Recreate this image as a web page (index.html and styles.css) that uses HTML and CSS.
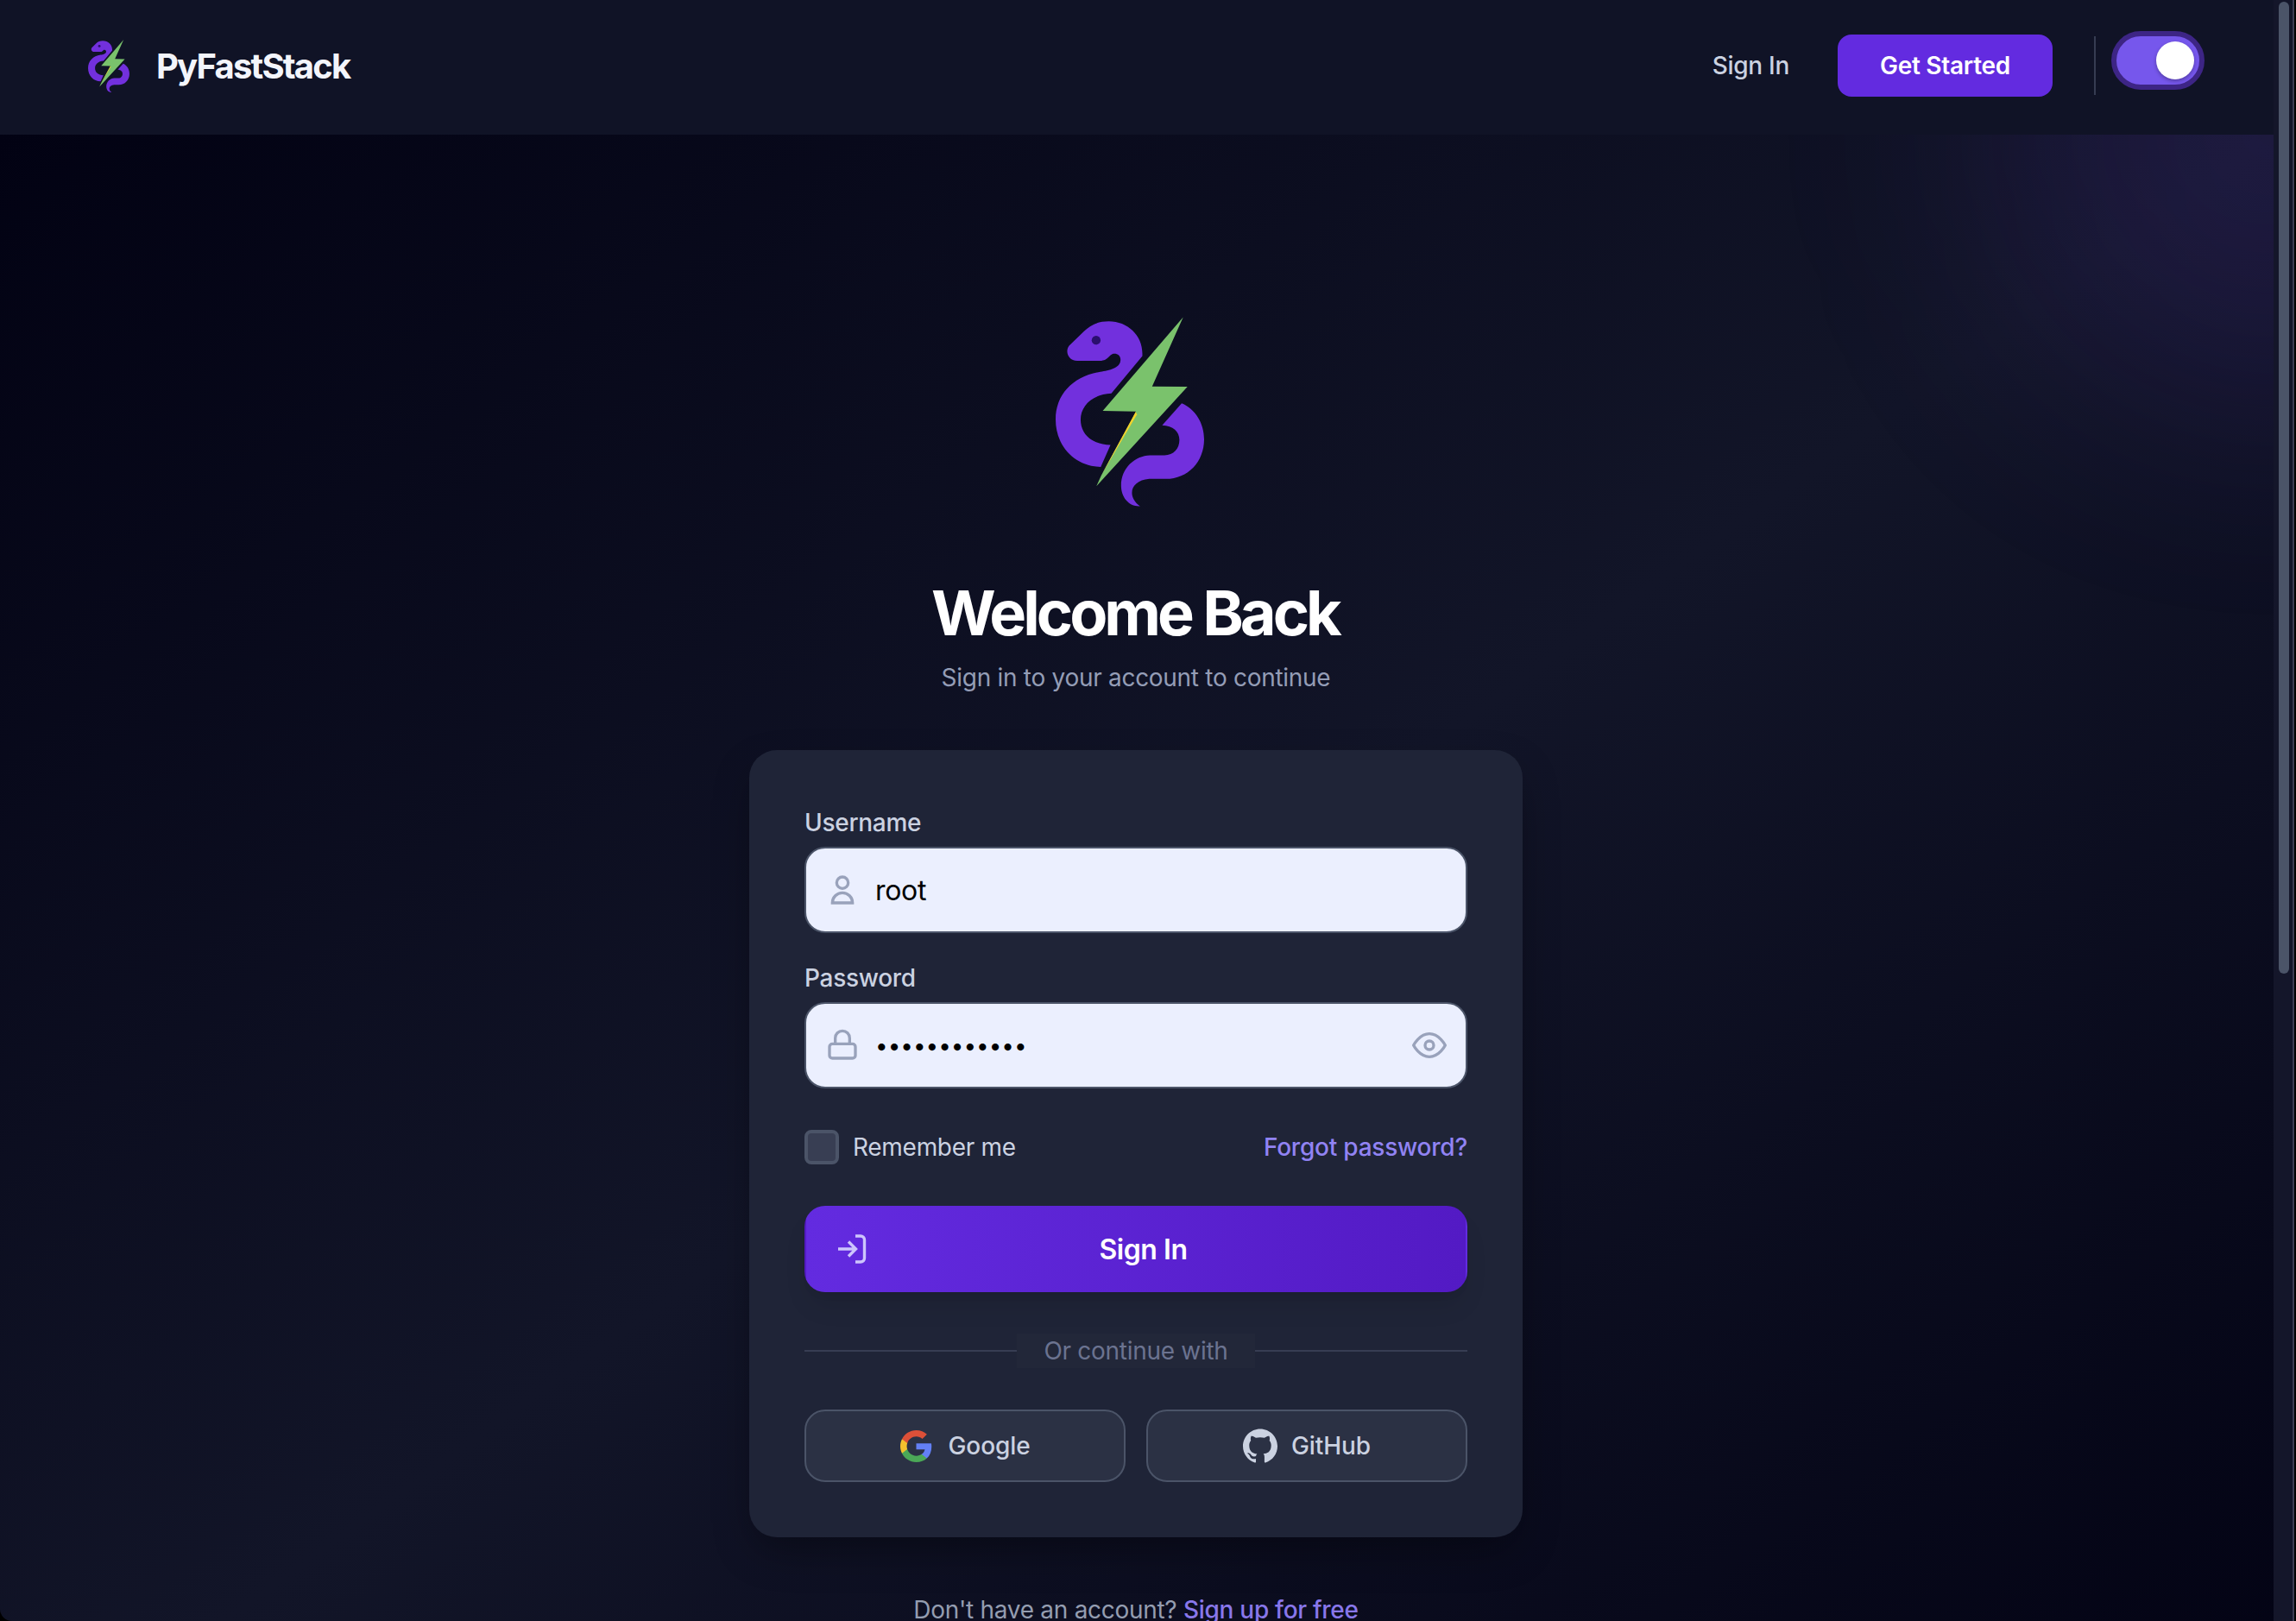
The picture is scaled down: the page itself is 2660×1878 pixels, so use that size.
FILE: index.html
```html
<!DOCTYPE html>
<html lang="en">
<head>
<meta charset="utf-8">
<title>Sign In - PyFastStack</title>
<link rel="stylesheet" href="styles.css">
</head>
<body>
<svg width="0" height="0" class="sprite" aria-hidden="true">
  <symbol id="logo" viewBox="129 82 517 658">
    <path fill="#7230dd" d="M176 181 L228 131 C250 108 278 96 314 96 C380 96 431 145 431 208 L431 217 L323 347 C255 350 216 392 216 438 C216 490 256 525 320 527 L286 603 C195 602 129 530 129 438 C129 350 190 287 285 272 C315 267 355 260 355 230 C355 217 345 209 334 209 C315 209 315 233 283 234 L204 234 C172 232 161 200 176 181 Z"/>
    <circle cx="270" cy="162" r="15.500" fill="#2b0f6e"/>
    <path fill="#7230dd" d="M568 382 C616 402 646 452 646 507 C646 585 590 645 513 645 L455 645 C390 650 375 705 423 740 C385 742 357 710 357 668 C357 608 405 564 458 563 L508 563 C540 563 560 540 560 509 C560 480 538 459 500 458 Z"/>
    <path fill="#7ac26c" d="M573 82 L465 323 L588 324 L271 670 L288 633 L409 410 L293 408 Z"/>
    <path fill="#f3d22b" d="M408 411 L412 421 L292 625 Z"/>
  </symbol>
</svg>
<div class="window">
  <div class="page">
    <header class="nav">
      <a class="brand"><svg class="brand-logo"><use href="#logo"/></svg><span>PyFastStack</span></a>
      <nav class="nav-actions">
        <a class="nav-link">Sign In</a>
        <a class="nav-cta">Get Started</a>
        <span class="nav-rule"></span>
        <span class="toggle"><span class="knob"></span></span>
      </nav>
    </header>
    <main class="main">
      <div class="glow"></div>
      <div class="content">
        <svg class="hero-logo"><use href="#logo"/></svg>
        <h1>Welcome Back</h1>
        <p class="lead">Sign in to your account to continue</p>
        <form class="card">
          <label class="label" for="user">Username</label>
          <div class="field">
            <svg class="icon" viewBox="0 0 24 24"><path d="M16 7a4 4 0 11-8 0 4 4 0 018 0zM12 14a7 7 0 00-7 7h14a7 7 0 00-7-7z"/></svg>
            <input id="user" type="text" value="root">
          </div>
          <label class="label" for="pass">Password</label>
          <div class="field">
            <svg class="icon" viewBox="0 0 24 24"><rect x="3" y="11" width="18" height="10" rx="2"/><path d="M7 11V7a5 5 0 0 1 10 0v4"/></svg>
            <span class="dots">••••••••••••</span>
            <svg class="icon eye" viewBox="0 0 24 24"><path d="M1 12s4-8 11-8 11 8 11 8-4 8-11 8-11-8-11-8z"/><circle cx="12" cy="12" r="3"/></svg>
          </div>
          <div class="options">
            <label class="remember"><span class="box"></span>Remember me</label>
            <a class="forgot">Forgot password?</a>
          </div>
          <button class="submit" type="button">
            <svg class="login-icon" viewBox="0 0 34 34"><path d="M20 2h6a4.500 4.500 0 0 1 4.500 4.500v21a4.500 4.500 0 0 1-4.500 4.500h-6M0 17h21M12 8.500l8.500 8.500-8.500 8.500"/></svg>
            <span>Sign In</span>
          </button>
          <div class="divider"><span>Or continue with</span></div>
          <div class="social">
            <button type="button" class="provider">
              <svg class="google" viewBox="1 1 22 22"><path fill="#6380f5" d="M22.560 12.250c0-.78-.07-1.530-.2-2.250H12v4.260h5.920c-.26 1.370-1.040 2.530-2.210 3.310v2.770h3.570c2.080-1.920 3.280-4.740 3.280-8.090z"/><path fill="#4ba857" d="M12 23c2.970 0 5.460-.98 7.280-2.660l-3.570-2.770c-.98.66-2.230 1.060-3.710 1.060-2.860 0-5.290-1.930-6.160-4.530H2.180v2.840C3.990 20.530 7.700 23 12 23z"/><path fill="#f3c12d" d="M5.840 14.090c-.22-.66-.35-1.360-.35-2.090s.13-1.430.35-2.090V7.070H2.180C1.430 8.550 1 10.220 1 12s.43 3.450 1.180 4.930l2.850-2.220.81-.62z"/><path fill="#dc5038" d="M12 5.380c1.620 0 3.060.56 4.210 1.640l3.150-3.150C17.450 2.090 14.970 1 12 1 7.700 1 3.990 3.470 2.180 7.070l3.660 2.840c.87-2.600 3.300-4.530 6.160-4.530z"/></svg>
              <span>Google</span>
            </button>
            <button type="button" class="provider">
              <svg class="github" viewBox="0 0 24 24"><path fill="currentColor" d="M12 .297c-6.630 0-12 5.373-12 12 0 5.303 3.438 9.800 8.205 11.385.6.113.82-.258.82-.577 0-.285-.01-1.040-.015-2.040-3.338.724-4.042-1.610-4.042-1.610C4.422 18.070 3.633 17.700 3.633 17.700c-1.087-.744.084-.729.084-.729 1.205.084 1.838 1.236 1.838 1.236 1.070 1.835 2.809 1.305 3.495.998.108-.776.417-1.305.760-1.605-2.665-.3-5.466-1.332-5.466-5.930 0-1.310.465-2.380 1.235-3.220-.135-.303-.54-1.523.105-3.176 0 0 1.005-.322 3.300 1.230.96-.267 1.980-.399 3-.405 1.020.006 2.040.138 3 .405 2.280-1.552 3.285-1.230 3.285-1.230.645 1.653.24 2.873.12 3.176.765.840 1.230 1.910 1.230 3.220 0 4.610-2.805 5.625-5.475 5.920.42.36.81 1.096.81 2.220 0 1.606-.015 2.896-.015 3.286 0 .315.210.690.825.570C20.565 22.092 24 17.592 24 12.297c0-6.627-5.373-12-12-12"/></svg>
              <span>GitHub</span>
            </button>
          </div>
        </form>
        <p class="signup">Don't have an account? <a>Sign up for free</a></p>
      </div>
    </main>
  </div>
  <div class="scrollbar"><span class="thumb"></span></div>
</div>
</body>
</html>
```
FILE: styles.css
```css
* { box-sizing: border-box; }

body {
  margin: 0;
  height: 1878px;
  overflow: hidden;
  background: #000;
  font-family: Inter, "Liberation Sans", sans-serif;
  font-size: 28px;
  line-height: 40px;
  letter-spacing: -.29px;
  color: #cbd2e1;
}

button, input { font: inherit; color: inherit; letter-spacing: inherit; }
h1, p { margin: 0; }
.sprite { position: absolute; }

.window { display: flex; width: 2658px; height: 1878px; overflow: hidden; border-bottom-left-radius: 14px; }
.page { width: 2634px; flex: none; height: 1878px; overflow: hidden; }

.nav {
  height: 156px;
  padding: 0 80px 0 102px;
  display: flex;
  align-items: flex-start;
  justify-content: space-between;
  background: #101326;
}
.brand { display: flex; align-items: center; gap: 31px; margin-top: 46px; }
.brand-logo { width: 48px; height: 61px; }
.brand span {
  font-size: 40px;
  font-weight: 700;
  letter-spacing: -1.800px;
  color: #f3f5fb;
}
.nav-actions { display: flex; align-items: flex-start; padding-top: 36px; }
.nav-link { font-weight: 500; padding-top: 20px; margin-right: 56px; }
.nav-cta {
  width: 249px;
  height: 72px;
  margin-top: 4px;
  display: flex;
  align-items: center;
  justify-content: center;
  border-radius: 16px;
  background: #632be0;
  color: #fff;
  font-weight: 600;
}
.nav-rule { width: 2px; height: 68px; margin: 6px 18px 0 48px; background: #363c52; }
.toggle {
  width: 108px;
  height: 68px;
  padding: 6px;
  display: flex;
  justify-content: flex-end;
  border: 6px solid #3d2585;
  border-radius: 34px;
  background: #7657ec;
}
.knob { width: 44px; height: 44px; border-radius: 50%; background: #fff; box-shadow: 0 2px 4px rgba(0, 0, 0, .3); }

.main {
  position: relative;
  height: 1910px;
  overflow: hidden;
  padding-right: 2px;
  background: linear-gradient(to bottom right, #020213, #121528 50%, #020213);
}
.glow {
  position: absolute;
  top: -320px;
  right: -320px;
  width: 640px;
  height: 640px;
  border-radius: 50%;
  background: rgba(109, 60, 220, .13);
  filter: blur(128px);
}
.content {
  position: relative;
  width: 896px;
  margin: 0 auto;
  padding-top: 211px;
  display: flex;
  flex-direction: column;
  align-items: center;
}
.hero-logo { width: 172px; height: 220px; margin-left: -14px; }
h1 {
  margin-top: 83px;
  font-size: 72px;
  line-height: 80px;
  font-weight: 700;
  letter-spacing: -3.950px;
  text-indent: -2px;
  color: #fff;
}
.lead { margin-top: 15px; color: #949db6; }

.card {
  width: 896px;
  height: 912px;
  margin-top: 64px;
  padding: 64px;
  border-radius: 32px;
  background: #1f2437;
  box-shadow: 0 20px 50px -10px rgba(0, 0, 0, .4);
}
.label { display: block; margin-bottom: 8px; font-weight: 500; }
.field {
  height: 100px;
  margin-bottom: 32px;
  padding: 0 22px;
  display: flex;
  align-items: center;
  border: 2px solid #4b5468;
  border-radius: 24px;
  background: #ebeffe;
  color: #000;
  font-size: 32px;
}
.field input {
  flex: 1;
  padding: 2px 0 0;
  margin-left: 18px;
  border: 0;
  outline: 0;
  background: none;
}
.dots { flex: 1; margin-left: 18px; padding-top: 2px; font-size: 26px; letter-spacing: 0; }
.icon { width: 40px; height: 40px; fill: none; stroke: #99a2bb; stroke-width: 2; }
.eye { stroke-linejoin: round; }

.options { display: flex; align-items: center; justify-content: space-between; height: 40px; margin-top: 48px; }
.remember { display: flex; align-items: center; gap: 16px; }
.box { width: 40px; height: 40px; border: 4px solid #4b5468; border-radius: 8px; background: #383e53; }
.forgot { color: #9183f3; font-weight: 500; letter-spacing: -.22px; }

.submit {
  position: relative;
  display: flex;
  align-items: center;
  justify-content: center;
  width: 100%;
  height: 100px;
  margin: 48px 0;
  padding: 2px 0 0 17px;
  border: 2px solid transparent;
  border-radius: 24px;
  background: linear-gradient(to right, #632be0, #531ac4);
  box-shadow: 0 20px 30px -6px rgba(0, 0, 0, .1), 0 8px 12px -8px rgba(0, 0, 0, .1);
  color: #fff;
  font-size: 32px;
  font-weight: 600;
  letter-spacing: -.45px;
}
.login-icon {
  position: absolute;
  left: 37px;
  top: 31px;
  width: 34px;
  height: 34px;
  fill: none;
  stroke: #cdc5fc;
  stroke-width: 3.400;
}

.divider { display: flex; align-items: center; height: 40px; color: #6b7390; }
.divider::before, .divider::after { content: ""; flex: 1; height: 2px; background: #373d53; }
.divider span { width: 276px; text-align: center; background: #222739; }

.social { display: flex; gap: 24px; margin-top: 48px; letter-spacing: -.1px; }
.provider {
  flex: 1;
  height: 84px;
  display: flex;
  align-items: center;
  justify-content: center;
  gap: 16px;
  border: 2px solid #4b5468;
  border-radius: 24px;
  background: #2b3144;
  font-weight: 500;
}
.google { width: 37px; height: 37px; margin: 0 2px 0 1px; }
.github { width: 40px; height: 40px; }

.signup { margin-top: 64px; color: #949db0; }
.signup a { color: #8877ea; font-weight: 500; }

.scrollbar {
  width: 24px;
  flex: none;
  padding: 2px 4px 0 6px;
  border-right: 2px solid #3c3c52;
  background: #14162a;
}
.thumb { display: block; width: 12px; height: 1126px; border-radius: 6px; background: #4b5468; }
```
